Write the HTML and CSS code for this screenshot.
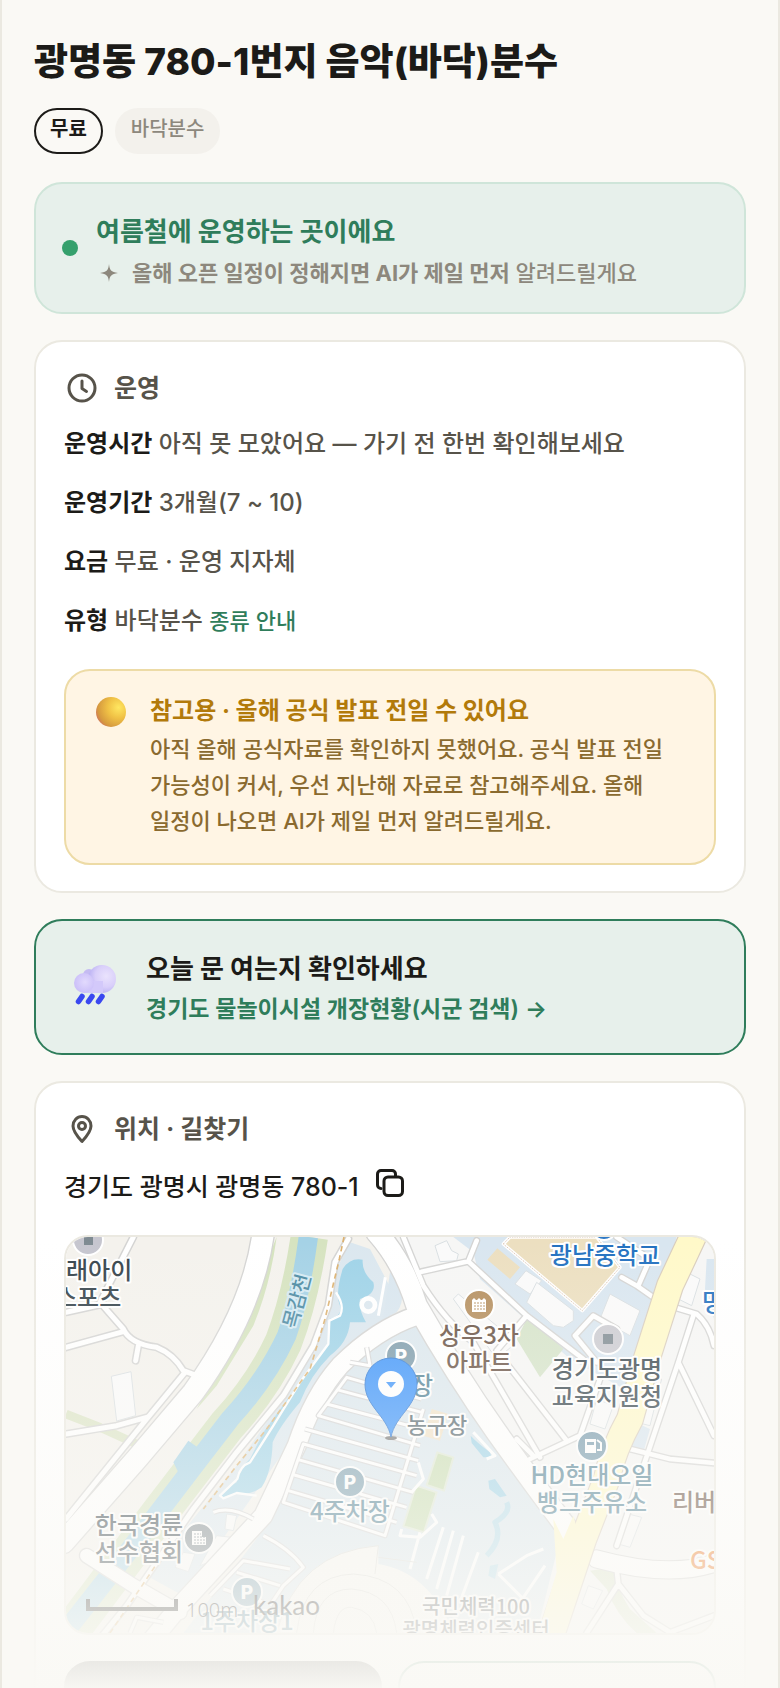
FILE: index.html
```html
<!DOCTYPE html>
<html lang="ko">
<head>
    <meta charset="UTF-8">
    <meta name="viewport" content="width=device-width, initial-scale=1.0">
    <title>광명동 780-1번지 음악(바닥)분수</title>
    <link rel="stylesheet" href="styles.css">
</head>
<body>
    <main class="page">
        <h1>광명동 780-1번지 음악(바닥)분수</h1>
        <div class="chips">
            <span class="chip chip-free">무료</span>
            <span class="chip">바닥분수</span>
        </div>

        <section class="season">
            <span class="season-dot"></span>
            <div class="season-text">
                <p class="season-title">여름철에 운영하는 곳이에요</p>
                <p class="season-sub">
                    <svg width="18" height="18" viewBox="0 0 18 18"><path d="M9 0C9.6 6 11 8 18 9C11 10 9.6 12 9 18C8.4 12 7 10 0 9C7 8 8.4 6 9 0Z" fill="#8d887d"/></svg>
                    <span><b>올해 오픈 일정이 정해지면 AI가 제일 먼저</b> 알려드릴게요</span>
                </p>
            </div>
        </section>

        <section class="card">
            <h2>
                <svg width="36" height="36" viewBox="0 0 36 36" fill="none" stroke="currentColor" stroke-width="3" stroke-linecap="round" stroke-linejoin="round"><circle cx="18" cy="18" r="13"/><path d="M18 11v7.500l4.500 3"/></svg>
                운영
            </h2>
            <div class="rows">
                <p><b>운영시간</b> 아직 못 모았어요 — 가기 전 한번 확인해보세요</p>
                <p><b>운영기간</b> 3개월(7 ~ 10)</p>
                <p><b>요금</b> 무료 · 운영 지자체</p>
                <p><b>유형</b> 바닥분수 <a href="#types">종류 안내</a></p>
            </div>
            <div class="notice">
                <svg class="ball" width="30" height="30" viewBox="0 0 30 30">
                    <defs>
                        <radialGradient id="ball" cx=".75" cy=".35" r=".8">
                            <stop offset="0" stop-color="#ffe761"/>
                            <stop offset=".45" stop-color="#f0c145"/>
                            <stop offset=".85" stop-color="#d69a3f"/>
                            <stop offset="1" stop-color="#d17a58"/>
                        </radialGradient>
                    </defs>
                    <circle cx="15" cy="15" r="15" fill="url(#ball)"/>
                </svg>
                <div>
                    <p class="notice-title">참고용 · 올해 공식 발표 전일 수 있어요</p>
                    <p class="notice-text">아직 올해 공식자료를 확인하지 못했어요. 공식 발표 전일 가능성이 커서, 우선 지난해 자료로 참고해주세요. 올해 일정이 나오면 AI가 제일 먼저 알려드릴게요.</p>
                </div>
            </div>
        </section>

        <a class="status-link" href="#status">
            <svg width="50" height="50" viewBox="0 0 50 50">
                <defs>
                    <radialGradient id="cloudA" cx=".65" cy=".4" r=".65">
                        <stop offset="0" stop-color="#eae3fd"/>
                        <stop offset=".6" stop-color="#d9cffa"/>
                        <stop offset="1" stop-color="#b9b0f3"/>
                    </radialGradient>
                    <radialGradient id="cloudB" cx=".55" cy=".45" r=".6">
                        <stop offset="0" stop-color="#e2dafd"/>
                        <stop offset="1" stop-color="#c9bdf8"/>
                    </radialGradient>
                </defs>
                <circle cx="17" cy="13" r="6" fill="#c5bbf2"/>
                <circle cx="30" cy="17" r="14" fill="url(#cloudA)"/>
                <path d="M12 19H31V31H12Z" fill="#d3c9fa"/>
                <circle cx="12" cy="21" r="10" fill="url(#cloudB)"/>
                <path d="M10 34.500L6.500 39.500M20 34.500L16.500 39.500M30 34.500L26.500 39.500" stroke="#3a48f0" stroke-width="5.500" stroke-linecap="round"/>
            </svg>
            <span class="status-text">
                <span class="status-title">오늘 문 여는지 확인하세요</span>
                <span class="status-sub">경기도 물놀이시설 개장현황(시군 검색) →</span>
            </span>
        </a>

        <section class="card">
            <h2>
                <svg width="36" height="36" viewBox="0 0 36 36" fill="none" stroke="currentColor" stroke-width="3"><path d="M18 30.500C12 24 9 19.500 9 15A9 9.500 0 0 1 27 15C27 19.500 24 24 18 30.500Z" stroke-linejoin="round"/><circle cx="18" cy="15" r="3.500"/></svg>
                위치 · 길찾기
            </h2>
            <div class="address">
                <span>경기도 광명시 광명동 780-1</span>
                <button class="copy" type="button" aria-label="주소 복사">
                    <svg width="30" height="30" viewBox="0 0 30 30" fill="none" stroke="currentColor" stroke-width="3" stroke-linejoin="round" stroke-linecap="round"><rect x="9" y="9" width="18.500" height="18.500" rx="4"/><path d="M6 20.500A3.500 3.500 0 0 1 2.500 17V6A3.500 3.500 0 0 1 6 2.500H17A3.500 3.500 0 0 1 20.500 6V8"/></svg>
                </button>
            </div>

            <div class="map">
                <svg viewBox="0 0 648 396" preserveAspectRatio="xMidYMid slice">
                    <g transform="scale(.33333) translate(-48 -54)" fill="none" stroke-linejoin="round">
                        <!-- land -->
                        <path d="M48 54H1992V1242H48Z" fill="#f4f2ed"/>
                        <path d="M1040 54H1992V1242H1400L1100 300Z" fill="#f6f6f5"/>
                        <!-- park and school grounds -->
                        <path d="M900 70L960 90L1050 260L850 460L700 700L560 900L400 1130L290 1070L560 740L800 390L860 150Z" fill="#dbe7ef"/>
                        <path d="M1090 300L1250 500L1390 720L1520 920V1000L1460 1242H400L650 920L770 640L870 460L1020 330Z" fill="#dbe7ee"/>
                        <path d="M1210 54H1880L1830 230L1740 520L1560 420L1290 180L1270 100Z" fill="#d9e6f0"/>
                        <path d="M1970 120H1992V300L1965 210ZM1755 610L1800 630L1780 700H1740Z" fill="#d9e6f0"/>
                        <path d="M1020 160Q1080 230 1040 280L1000 300Z" fill="#d9e6ef"/>
                        <!-- river -->
                        <path d="M680 54Q660 200 610 320L500 500L440 570L560 350Z" fill="#d5e3bf"/>
                        <path d="M778 54Q750 240 700 370Q640 500 530 620L330 880L60 1240" stroke="#d6e3c0" stroke-width="112"/>
                        <path d="M775 54Q750 240 710 350Q650 480 540 600L440 730L280 940L60 1220" stroke="#a5d2e6" stroke-width="58"/>
                        <path d="M415 665L450 690L400 790L370 730Z" fill="#a5d2e6"/>
                        <path d="M48 585L150 625L270 680" stroke="#dbe4c5" stroke-width="26"/>
                        <!-- pond -->
                        <path d="M878 150Q900 115 938 122Q935 160 970 190Q980 225 930 240Q925 270 948 310H900Q895 370 840 410Q780 470 750 550Q690 620 668 670Q665 760 635 805Q600 830 560 822L515 838Q505 820 560 790Q565 750 600 720L640 640L750 490L835 375L838 300Q880 290 870 260Q855 225 878 150Z" fill="#9fd3e8"/>
                        <path d="M1262 650Q1280 670 1320 700L1325 715H1300L1265 672ZM1315 785L1335 780L1370 830L1350 835L1318 810Z" fill="#9fd3e8"/>
                        <path d="M1370 850Q1385 880 1335 910Q1360 960 1310 1010" stroke="#b4dbea" stroke-width="16"/>
                        <path d="M1320 1040L1345 1035L1335 1080L1315 1070Z" fill="#b4dbea"/>
                        <path d="M858 220Q885 260 870 290L838 305L835 375L750 490L670 620L600 730Q570 740 562 780L510 830L520 838L560 822L620 830" stroke="#fff" stroke-width="7"/>
                        <circle cx="955" cy="258" r="20" stroke="#fff" stroke-width="14"/>
                        <path d="M1006 175L985 290" stroke="#fff" stroke-width="9"/>
                        <!-- sand, grass -->
                        <path d="M1360 75L1380 54H1640L1710 145L1597 275Z" fill="#ecdfc0" stroke="#fff" stroke-width="10"/>
                        <path d="M1360 75L1380 54H1640L1710 145L1597 275Z" stroke="#c9a78f" stroke-width="2" stroke-dasharray="4 3"/>
                        <path d="M1342 88L1410 145L1380 180L1312 122Z" fill="#ecdfc0"/>
                        <path d="M1145 570L1195 585L1170 665L1120 650Z" fill="#f1e2c8"/>
                        <path d="M1435 290L1540 390L1470 475L1400 360Z" fill="#d5e3c9"/>
                        <path d="M1162 700L1210 715L1182 815L1130 798ZM1098 800L1160 820L1122 940L1060 922Z" fill="#c9ddb2" stroke="#dfe8d4" stroke-width="6"/>
                        <path d="M1620 1055L1690 1045Q1700 1110 1740 1170L1820 1242H1760Q1700 1190 1670 1110Z" fill="#dde6cd"/>
                        <!-- buildings -->
                        <g fill="#fafafa" stroke="#d9dfe2" stroke-width="3">
                            <path d="M184 472L243 458L257 590L200 606Z"/>
                            <path d="M1155 80L1190 65L1205 95L1225 105L1220 125L1170 128Z"/>
                            <path d="M1428 155L1475 185L1440 225L1395 195Z"/>
                            <path d="M1460 190L1570 275V305L1540 325L1510 320L1430 250Z"/>
                            <path d="M1680 225L1770 275L1740 350L1650 300Z"/>
                            <path d="M1910 160L1950 180L1925 260L1885 240Z"/>
                            <path d="M1640 540L1690 560L1665 630L1620 615ZM1770 520L1835 480L1800 620L1760 610Z"/>
                            <path d="M1735 885L1775 895L1740 985L1705 975ZM1615 1100L1658 1115L1630 1170L1595 1155Z"/>
                            <path d="M1210 240L1225 225L1400 370L1340 420Z"/>
                            <path d="M530 885L560 890L550 935L525 930ZM500 950L545 955L500 1020L450 1040ZM400 1000L435 1005L415 1058L375 1045Z"/>
                        </g>
                        <!-- casing then fill for every street -->
                        <g stroke="#d4d4d3" stroke-linecap="round">
                            <path d="M640 40Q610 270 430 520L260 720L40 970" stroke-width="72"/>
                            <path d="M980 40Q1060 130 1100 260Q1220 470 1340 640Q1440 780 1560 940" stroke-width="70"/>
                            <path d="M1100 290Q980 330 870 440Q790 530 740 680L640 890L390 1160L300 1270" stroke-width="62"/>
                            <path d="M110 1010L250 1100L390 1180" stroke-width="48"/>
                            <path d="M1640 1020Q1860 1080 2000 1030" stroke-width="58"/>
                            <path d="M895 60L855 130L835 260L790 380L700 530L560 700L430 870L230 1160L140 1270M250 54L150 250L220 330Q240 375 320 385Q370 405 400 455L440 470M48 385L220 338M48 280L160 255M265 380L257 425M405 460L290 600L48 900M48 645L200 620L290 595" stroke-width="24"/>
                            <path d="M1060 54L1120 200Q1190 310 1270 370L1470 715M1115 158L1255 127L1280 65M1255 127L1430 290L1600 420M1430 290L1340 395L1550 665M1440 720L1590 650L1650 480M1575 350L1630 290L1700 330M1575 350L1640 430M1715 175L1760 200L1810 235M1765 200L1800 120L1700 54M1840 255L1940 285Q1980 320 1992 380M1930 290L1885 430L1700 980M1885 430L1992 650M1740 690L1860 720L1992 732M1700 1050L1705 1095L1610 1242M1705 1095L1780 1190L1860 1240L1992 1190M1400 660L1450 710" stroke-width="22"/>
                        </g>
                        <g stroke="#fff" stroke-linecap="round">
                            <path d="M640 40Q610 270 430 520L260 720L40 970" stroke-width="64"/>
                            <path d="M980 40Q1060 130 1100 260Q1220 470 1340 640Q1440 780 1560 940" stroke-width="62"/>
                            <path d="M1100 290Q980 330 870 440Q790 530 740 680L640 890L390 1160L300 1270" stroke-width="54"/>
                            <path d="M110 1010L250 1100L390 1180" stroke-width="40"/>
                            <path d="M1640 1020Q1860 1080 2000 1030" stroke-width="52"/>
                            <path d="M895 60L855 130L835 260L790 380L700 530L560 700L430 870L230 1160L140 1270M250 54L150 250L220 330Q240 375 320 385Q370 405 400 455L440 470M48 385L220 338M48 280L160 255M265 380L257 425M405 460L290 600L48 900M48 645L200 620L290 595" stroke-width="15"/>
                            <path d="M1060 54L1120 200Q1190 310 1270 370L1470 715M1115 158L1255 127L1280 65M1255 127L1430 290L1600 420M1430 290L1340 395L1550 665M1440 720L1590 650L1650 480M1575 350L1630 290L1700 330M1575 350L1640 430M1715 175L1760 200L1810 235M1765 200L1800 120L1700 54M1840 255L1940 285Q1980 320 1992 380M1930 290L1885 430L1700 980M1885 430L1992 650M1740 690L1860 720L1992 732M1700 1050L1705 1095L1610 1242M1705 1095L1780 1190L1860 1240L1992 1190M1400 660L1450 710" stroke-width="14"/>
                        </g>
                        <path d="M882 54L868 120L825 300L780 450L650 630L560 740L460 870M330 1020L180 1242" stroke="#dcb16f" stroke-width="5" stroke-dasharray="16 12"/>
                        <!-- main road -->
                        <path d="M1935 40L1860 200L1790 420L1740 600Q1690 690 1670 780L1600 960L1500 1260" stroke="#d9cdbd" stroke-width="84"/>
                        <path d="M1935 40L1860 200L1790 420L1740 600Q1690 690 1670 780L1600 960L1500 1260" stroke="#fff9c9" stroke-width="77"/>
                        <path d="M1510 900L1540 960L1570 890L1600 1000L1530 1242H1465L1520 1060Z" fill="#fff9c9"/>
                        <!-- parking lots -->
                        <g stroke="#d5d5d6" stroke-width="16">
                            <path d="M900 430L960 440L950 385M1115 540L890 475L805 590L1110 680M860 512L1115 580M830 555L1115 630M765 630L1105 725M1100 770L760 675L700 850L1005 950L1120 570M745 722L1090 820M733 768L1070 865M715 815L1040 910"/>
                            <path d="M640 950Q720 990 760 1045L700 1100L660 1160M480 1130L580 1025L720 1050M560 1060L690 1100M520 1110L640 1150M490 880Q540 860 610 900M240 1242L260 1195L340 1210"/>
                        </g>
                        <g stroke="#fff" stroke-width="9">
                            <path d="M900 430L960 440L950 385M1115 540L890 475L805 590L1110 680M860 512L1115 580M830 555L1115 630M765 630L1105 725M1100 770L760 675L700 850L1005 950L1120 570M745 722L1090 820M733 768L1070 865M715 815L1040 910"/>
                            <path d="M640 950Q720 990 760 1045L700 1100L660 1160M480 1130L580 1025L720 1050M560 1060L690 1100M520 1110L640 1150M490 880Q540 860 610 900M240 1242L260 1195L340 1210"/>
                            <path d="M1105 730L1120 780L1085 820M1055 930L1050 950L1110 955L1160 910L1145 885M1110 940L1080 1050M1180 925L1130 1080M1210 935L1160 1110M1240 950L1190 1130M1285 1000L1230 1150M1345 1065L1430 1010L1480 990M1345 1065L1430 1150M1485 1040L1410 1150M1270 640L1335 710L1310 720"/>
                        </g>
                        <!-- velodrome -->
                        <path d="M680 1242Q740 1000 985 980V1035Q1140 1060 1210 1242Z" fill="#f7f6f2"/>
                        <g stroke="#dcdcd8" stroke-width="3">
                            <path d="M680 1242Q740 1000 985 980L975 1065M985 1015L1100 1030M740 1242Q760 1070 910 1065Q1080 1075 1100 1242M790 1242Q800 1110 905 1110Q1025 1120 1040 1242M850 1242Q860 1160 905 1165Q970 1175 980 1242"/>
                        </g>
                    </g>

                    <!-- labels -->
                    <g class="labels">
                        <text x="0" y="42">래아이</text>
                        <text x="-11" y="69">스포츠</text>
                        <text class="water" x="231" y="71" transform="rotate(-75 231 64)">목감천</text>
                        <text class="blue" x="539" y="27" text-anchor="middle">광남중학교</text>
                        <text class="blue" x="636" y="74">명</text>
                        <text class="brown" x="413" y="107" text-anchor="middle">상우3차</text>
                        <text class="brown" x="413" y="134" text-anchor="middle">아파트</text>
                        <text x="541" y="141" text-anchor="middle">경기도광명</text>
                        <text x="541" y="168" text-anchor="middle">교육지원청</text>
                        <text class="teal" x="356" y="157" text-anchor="middle">장</text>
                        <text class="mid" x="371" y="196" text-anchor="middle">농구장</text>
                        <text class="teal" x="526" y="247" text-anchor="middle">HD현대오일</text>
                        <text class="teal" x="526" y="274" text-anchor="middle">뱅크주유소</text>
                        <text class="brown" x="606" y="274">리버</text>
                        <text class="orange" x="624" y="332">GS</text>
                        <text class="teal" x="284" y="283" text-anchor="middle">4주차장</text>
                        <text x="73" y="297" text-anchor="middle">한국경륜</text>
                        <text x="73" y="324" text-anchor="middle">선수협회</text>
                        <text class="teal" x="181" y="393" text-anchor="middle">1주차장1</text>
                        <text class="small" x="410" y="377" text-anchor="middle">국민체력100</text>
                        <text class="small" x="410" y="400" text-anchor="middle">광명체력인증센터</text>
                    </g>

                    <!-- place icons -->
                    <g stroke="#fff" stroke-width="2">
                        <circle cx="22" cy="3" r="15" fill="#c6c6cf"/>
                        <circle cx="542" cy="102" r="15" fill="#cbcbd1"/>
                        <circle cx="413" cy="68" r="15" fill="#b58f5f"/>
                        <circle cx="538" cy="-10" r="13" fill="#2f7ac6"/>
                        <circle cx="335" cy="119" r="15" fill="#7c9bab"/>
                        <circle cx="284" cy="245" r="15" fill="#7c9fb0"/>
                        <circle cx="181" cy="355" r="15" fill="#7c9fb0"/>
                        <circle cx="526" cy="209" r="15" fill="#7599ac"/>
                        <circle cx="133" cy="301" r="15" fill="#7b868d"/>
                    </g>
                    <path d="M18 0H27V8H18ZM537 97H547V107H537Z" fill="#7f8b92"/>
                    <path d="M406 63L408 61L410 63H411L413 61L415 63H416L418 61L420 63V75H406ZM519 202H530V216H519ZM126 294H136V300H140V308H126Z" fill="#fff"/>
                    <path d="M531 203L535 206V213H531" fill="none" stroke="#fff" stroke-width="2"/>
                    <path d="M521 205H528V208H521Z" fill="#7599ac"/>
                    <path d="M408 66H419M408 69H419M408 72H419" stroke="#b58f5f" stroke-width="1" stroke-dasharray="2 1"/>
                    <path d="M128 297H135M128 300H139M128 303H139M128 306H139" stroke="#7b868d" stroke-width="1" stroke-dasharray="2 1"/>
                    <g class="parking">
                        <text x="335" y="126" text-anchor="middle">P</text>
                        <text x="284" y="252" text-anchor="middle">P</text>
                        <text x="181" y="362" text-anchor="middle">P</text>
                    </g>

                    <!-- marker -->
                    <ellipse cx="325" cy="201" rx="6" ry="2" fill="#777"/>
                    <path d="M325 200C321 179 299 169 299 147A26 26 0 0 1 351 147C351 169 329 179 325 200Z" fill="#3c94fb" stroke="#2f7ad6"/>
                    <circle cx="325" cy="147" r="13" fill="#fff"/>
                    <path d="M320 145H330L325 151Z" fill="#3c94fb"/>

                    <path d="M22 362V372H110V362" fill="none" stroke="#222" stroke-width="4"/>
                    <text class="scale" x="120" y="380">100m</text>
                    <text class="brand" x="187" y="378">kakao</text>
                </svg>
            </div>

            <div class="actions">
                <button class="action action-dark" type="button" aria-label="길찾기"></button>
                <button class="action" type="button" aria-label="지도 보기"></button>
            </div>
        </section>
        <div class="fade"></div>
    </main>
</body>
</html>
```
FILE: styles.css
```css
* {
    box-sizing: border-box;
}
body {
    margin: 0;
    background: #faf9f5;
    color: #1c1b18;
    font-family: Inter, "Noto Sans CJK KR", sans-serif;
    font-size: 25px;
    font-weight: 500;
    word-break: keep-all;
}
h1, h2, p {
    margin: 0;
}
.page {
    position: relative;
    height: 100vh;
    overflow: hidden;
    padding: 34px 32px 0;
    border-left: 2px solid #ebe9e1;
    border-right: 2px solid #ebe9e1;
}
h1 {
    font-size: 37px;
    font-weight: 800;
    line-height: 56px;
}
.chips {
    display: flex;
    gap: 12px;
    margin: 18px 0 28px;
}
.chip {
    height: 46px;
    padding: 0 14px;
    border: 2px solid #f3f1ec;
    border-radius: 23px;
    background: #f3f1ec;
    color: #8d887d;
    font-size: 20px;
    line-height: 38px;
}
.chip-free {
    border-color: #1c1b18;
    background: none;
    color: #1c1b18;
    font-weight: 700;
}

.season {
    display: flex;
    align-items: center;
    gap: 18px;
    height: 132px;
    padding: 0 26px;
    border: 2px solid #cfe5d9;
    border-radius: 28px;
    background: #e7f0eb;
}
.season-dot {
    width: 16px;
    height: 16px;
    border-radius: 50%;
    background: #35a06c;
}
.season-text {
    padding-top: 8px;
}
.season-title {
    color: #2f7d5b;
    font-size: 26px;
    font-weight: 700;
    line-height: 42px;
}
.season-sub {
    display: flex;
    align-items: center;
    gap: 14px;
    padding-left: 4px;
    color: #8d887d;
    font-size: 22px;
    line-height: 40px;
}

.card {
    margin-top: 26px;
    padding: 26px 28px;
    border: 2px solid #ebe9e1;
    border-radius: 28px;
    background: #fff;
}
h2 {
    display: flex;
    align-items: center;
    gap: 14px;
    color: #57534a;
    font-size: 25px;
    font-weight: 700;
    line-height: 40px;
}
.rows {
    display: grid;
    gap: 20px;
    margin: 16px 0 28px;
    color: #57534a;
    font-size: 24px;
    line-height: 39px;
}
.rows b {
    color: #1c1b18;
}
.rows a {
    color: #2f7d5b;
    font-size: 22px;
    text-decoration: none;
}

.notice {
    display: flex;
    gap: 24px;
    padding: 22px 30px 24px;
    border: 2px solid #eddba6;
    border-radius: 26px;
    background: #fff5e4;
}
.ball {
    flex: none;
    margin-top: 4px;
}
.notice-title {
    color: #b27a0a;
    font-size: 24px;
    font-weight: 700;
    line-height: 36px;
}
.notice-text {
    margin-top: 2px;
    color: #8a6a2f;
    font-size: 22px;
    line-height: 36px;
}

.status-link {
    display: flex;
    align-items: center;
    gap: 24px;
    height: 136px;
    margin-top: 26px;
    padding: 0 36px;
    border: 2px solid #2f7d5b;
    border-radius: 28px;
    background: #e7f0eb;
    color: #1c1b18;
    font-size: 26px;
    font-weight: 700;
    text-decoration: none;
}
.status-text {
    display: grid;
    padding-top: 4px;
    line-height: 41px;
}
.status-sub {
    color: #2f7d5b;
    font-size: 23px;
    font-weight: 600;
}

.address {
    display: flex;
    gap: 16px;
    margin: 16px 0 26px;
    line-height: 44px;
}
.copy {
    display: flex;
    align-items: center;
    height: 36px;
    padding: 0;
    border: 0;
    background: none;
    color: #1c1b18;
}

.map {
    height: 400px;
    overflow: hidden;
    border: 2px solid #ebe9e1;
    border-radius: 24px;
}
.map svg {
    display: block;
    width: 100%;
    height: 100%;
}
.labels text {
    fill: #36444c;
    stroke: #fff;
    stroke-width: 4px;
    stroke-linejoin: round;
    paint-order: stroke;
    font-family: "Noto Sans CJK KR", sans-serif;
    font-size: 24px;
}
.labels .water {
    fill: #4c8aa3;
    stroke: #d5eaf3;
    font-size: 20px;
    text-anchor: middle;
}
.labels .blue {
    fill: #2371c0;
}
.labels .brown {
    fill: #664f42;
}
.labels .teal {
    fill: #4f8094;
}
.labels .mid {
    fill: #56676f;
    font-size: 22px;
}
.labels .orange {
    fill: #ec7a26;
}
.labels .small {
    fill: #4e5458;
    font-size: 20px;
}
.parking text {
    fill: #fff;
    font-size: 19px;
    font-weight: 800;
}
.scale {
    fill: #222;
    font-family: "Noto Sans", sans-serif;
    font-size: 20px;
    font-weight: 300;
}
.brand {
    fill: #222;
    font-family: Lato, sans-serif;
    font-size: 26px;
    font-weight: 400;
}

.actions {
    display: grid;
    grid-template-columns: 1fr 1fr;
    gap: 16px;
    margin-top: 26px;
}
.action {
    height: 88px;
    border: 2px solid #2f7d5b;
    border-radius: 26px;
    background: #fff;
}
.action-dark {
    border-color: #1c1b18;
    background: #1c1b18;
}

/* bottom fade over the content */
.fade {
    position: absolute;
    right: 0;
    bottom: 0;
    left: 0;
    height: 448px;
    background: linear-gradient(rgba(250, 249, 245, 0), rgba(250, 249, 245, .59) 65%, rgba(250, 249, 245, .79) 82%, rgba(250, 249, 245, .93) 94%, rgba(250, 249, 245, .99));
    pointer-events: none;
}
```
